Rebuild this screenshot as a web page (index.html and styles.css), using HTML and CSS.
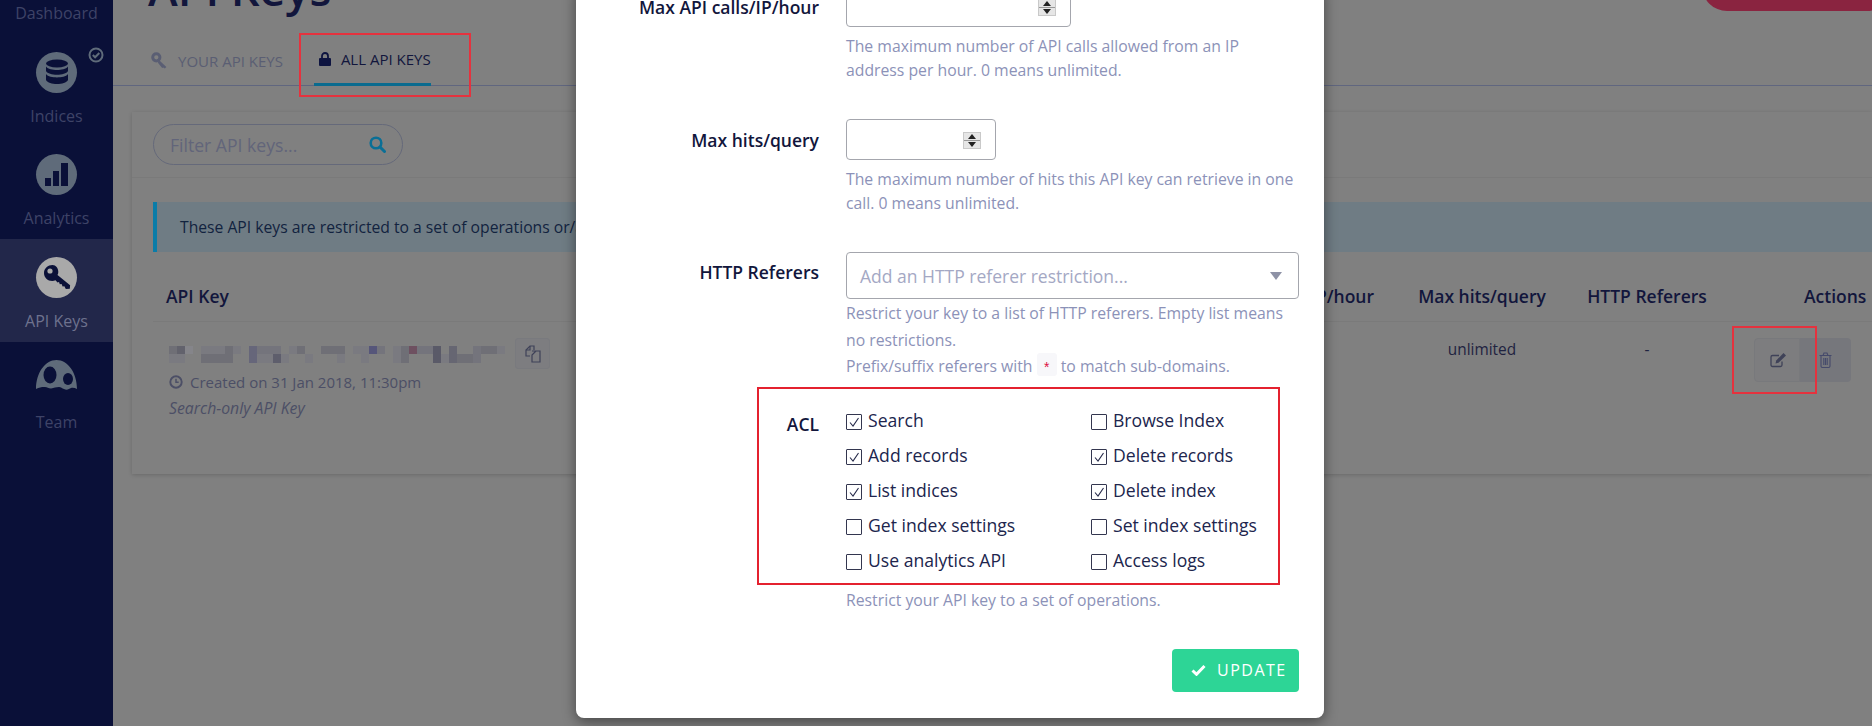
FILE: index.html
```html
<!DOCTYPE html>
<html lang="en">
<head>
<meta charset="utf-8">
<title>API Keys</title>
<link rel="stylesheet" href="styles.css">
</head>
<body>
<div class="app">
  <nav class="sidebar">
    <a class="nav-item"><span class="nav-circle"></span><span class="nav-label">Dashboard</span></a>
    <a class="nav-item">
      <span class="nav-circle">
        <svg width="24" height="26" viewBox="0 0 24 26"><g fill="#0a1038"><ellipse cx="12" cy="4.500" rx="11" ry="4"/><path d="M1 7.500c2 2.600 6.500 3.500 11 3.500s9-.9 11-3.500V12c-1.500 2.600-6 3.800-11 3.800S2.500 14.600 1 12z"/><path d="M1 15c2 2.600 6.500 3.400 11 3.400S21 17.600 23 15v6c-1.500 2.600-6 4-11 4S2.500 23.600 1 21z"/></g></svg>
      </span>
      <svg class="nav-badge" width="16" height="16" viewBox="0 0 16 16"><circle cx="8" cy="8" r="6.500" fill="none" stroke="#5f6b7a" stroke-width="2"/><path d="M4.800 8l2.300 2.300 4.200-4.300" fill="none" stroke="#5f6b7a" stroke-width="2"/></svg>
      <span class="nav-label">Indices</span>
    </a>
    <a class="nav-item">
      <span class="nav-circle">
        <svg width="24" height="26" viewBox="0 0 24 26"><g fill="#0a1038"><rect x="0" y="16" width="6" height="8"/><rect x="8" y="9" width="6" height="15"/><rect x="16" y="1" width="7" height="23"/></g></svg>
      </span>
      <span class="nav-label">Analytics</span>
    </a>
    <a class="nav-item is-active">
      <span class="nav-circle">
        <svg width="30" height="30" viewBox="0 0 30 30"><path fill="#0a1038" d="M10.500 2C6 2 2 5.500 2 10c0 4.500 3.700 8 8.200 8 1.200 0 2.300-.2 3.300-.7l2 2.200 1.500-.4.800 2.100 1.800-.1 1 2.400 1.800-.2 1.400 2.700 4-.2.300-3.600L15.500 12c.6-1 .8-1.900.8-3 0-4-2.500-7-5.800-7z"/><circle cx="8" cy="8" r="2.600" fill="#a9a9a9"/></svg>
      </span>
      <span class="nav-label">API Keys</span>
    </a>
    <a class="nav-item">
      <span class="nav-team">
        <svg width="41" height="31" viewBox="0 0 41 31"><path fill="#5f6b7a" d="M0 29C0 13 9 0 20.500 0S41 13 41 29c-2-1-4-1.500-6-1-2 1-4 2.500-7 1-2-.5-3-2-5-2-3 0-5 1-8 1.500-3 0-4-2-7-1.500-2.500 0-5 .5-8 2z"/><ellipse cx="14" cy="15" rx="6.500" ry="8.500" fill="#0a1038"/><ellipse cx="32" cy="19" rx="5" ry="6" fill="#0a1038"/></svg>
      </span>
      <span class="nav-label">Team</span>
    </a>
  </nav>

  <main class="main">
    <header class="head-row">
      <h1 class="title">API Keys</h1>
      <span class="add-btn"></span>
    </header>
    <div class="tabs">
      <a class="tab">
        <svg class="tab-icon" width="17" height="17" viewBox="0 0 16 16"><circle cx="5" cy="5" r="3.400" fill="none" stroke="#5a5e73" stroke-width="2.800"/><path d="M7.500 7.500l7 6.500-1.500 1.500-1.500-1-1 .5-4-5z" fill="#5a5e73"/></svg>
        YOUR API KEYS
      </a>
      <a class="tab is-current">
        <svg class="tab-icon" width="12" height="14" viewBox="0 0 12 14"><path d="M3 6.500V4a3 3 0 0 1 6 0v2.500" fill="none" stroke="#0e1440" stroke-width="1.800"/><rect y="6" width="12" height="8" rx="1" fill="#0e1440"/></svg>
        ALL API KEYS
      </a>
    </div>

    <section class="card">
      <div class="filter-bar">
        <div class="search">
          <input class="search-input" type="text" placeholder="Filter API keys...">
          <svg width="17" height="17" viewBox="0 0 17 17"><circle cx="7" cy="7" r="5.300" fill="none" stroke="#0a6f96" stroke-width="2.600"/><path d="M11 11l4.500 4.500" stroke="#0a6f96" stroke-width="3" stroke-linecap="round"/></svg>
        </div>
      </div>
      <div class="alert">These API keys are restricted to a set of operations or/and limits.</div>
      <div class="table-row table-head">
        <div class="cell-key">API Key</div>
        <div class="cell-calls">Max API calls/IP/hour</div>
        <div class="cell-mid">Max hits/query</div>
        <div class="cell-ref">HTTP Referers</div>
        <div class="cell-actions">Actions</div>
      </div>
      <div class="table-row table-body">
        <div class="cell-key">
          <div class="key-line">
            <svg class="key-blur" width="339" height="17" viewBox="0 0 339 17">
              <g fill="#6f6f76"><rect width="8" height="8"/><rect x="8" width="8" height="8" fill="#62626c"/><rect y="8" width="16" height="9" fill="#7a7a80"/><rect x="16" width="8" height="8" fill="#85858a"/><rect x="32" y="8" width="32" height="9"/><rect x="32" width="24" height="8" fill="#7a7a80"/><rect x="56" width="8" height="8"/><rect x="64" width="8" height="8" fill="#7a7a80"/><rect x="80" width="8" height="17" fill="#66667a"/><rect x="88" width="24" height="8" fill="#74747c"/><rect x="88" y="8" width="16" height="9" fill="#7a7a80"/><rect x="104" y="8" width="8" height="9" fill="#5e5e6c"/><rect x="112" y="8" width="8" height="9" fill="#7a7a80"/><rect x="120" width="8" height="8" fill="#7a7a80"/><rect x="128" width="8" height="8"/><rect x="136" y="8" width="8" height="9" fill="#7a7a80"/><rect x="152" width="24" height="8"/><rect x="168" y="8" width="8" height="9" fill="#7a7a80"/><rect x="184" width="16" height="8" fill="#7a7a80"/><rect x="192" y="8" width="8" height="9" fill="#7a7a80"/><rect x="200" width="8" height="8" fill="#56567a"/><rect x="208" width="8" height="8" fill="#74747c"/><rect x="224" width="8" height="17" fill="#7a7a80"/><rect x="232" y="0" width="8" height="17"/><rect x="240" width="8" height="8" fill="#6e5060"/><rect x="248" width="16" height="8" fill="#74747c"/><rect x="264" width="8" height="17" fill="#5a5a68"/><rect x="272" y="8" width="8" height="9" fill="#7a7a80"/><rect x="280" width="8" height="17" fill="#666672"/><rect x="288" y="8" width="16" height="9"/><rect x="304" width="8" height="17" fill="#74747c"/><rect x="312" width="16" height="8" fill="#6f6f76"/><rect x="328" width="8" height="8" fill="#7a7a80"/></g>
            </svg>
            <span class="copy-btn">
              <svg width="18" height="18" viewBox="0 0 18 18"><g fill="none" stroke="#3f4258" stroke-width="1.200"><path d="M6 11H2V5l4-4h4v4"/><path d="M2 5h4V1"/><path d="M8 6h8v11H8V10l4-4"/></g></svg>
            </span>
          </div>
          <div class="meta">
            <svg width="14" height="14" viewBox="0 0 13 13"><circle cx="6.500" cy="6.500" r="5.300" fill="none" stroke="#4c4f66" stroke-width="1.800"/><path d="M6.500 3.500v3.200h2.500" fill="none" stroke="#4c4f66" stroke-width="1.400"/></svg>
            Created on 31 Jan 2018, 11:30pm
          </div>
          <div class="key-type">Search-only API Key</div>
        </div>
        <div class="cell-calls"></div>
        <div class="cell-mid">unlimited</div>
        <div class="cell-ref">-</div>
        <div class="cell-actions">
          <div class="btn-group">
            <span class="action-btn is-edit">
              <svg width="17" height="16" viewBox="0 0 17 16"><path d="M12 9.500V13a1.500 1.500 0 0 1-1.500 1.500h-8A1.500 1.500 0 0 1 1 13V5a1.500 1.500 0 0 1 1.500-1.500H9" fill="none" stroke="#3f4258" stroke-width="1.300"/><path d="M5.500 11.500l.7-3L13.500 1l2.500 2.500-7.500 7.300z" fill="#3f4258"/></svg>
            </span>
            <span class="action-btn is-delete">
              <svg width="13" height="16" viewBox="0 0 13 16"><g fill="none" stroke="#454a6b" stroke-width="1.100"><path d="M.5 3.500h12M2 3.500V14a1.500 1.500 0 0 0 1.500 1.500h6A1.500 1.500 0 0 0 11 14V3.500M4 3.500L5 1h3l1 2.500M4.800 6v7M6.500 6v7M8.200 6v7"/></g></svg>
            </span>
          </div>
        </div>
      </div>
    </section>
  </main>

  <div class="modal">
    <div class="form-row">
      <label class="form-label label-input">Max API calls/IP/hour</label>
      <div class="form-field">
        <div class="number-input is-wide"><span class="spin"><i class="up"></i><i class="down"></i></span></div>
        <p class="help">The maximum number of API calls allowed from an IP address per hour. 0 means unlimited.</p>
      </div>
    </div>
    <div class="form-row">
      <label class="form-label label-input">Max hits/query</label>
      <div class="form-field">
        <div class="number-input"><span class="spin"><i class="up"></i><i class="down"></i></span></div>
        <p class="help">The maximum number of hits this API key can retrieve in one call. 0 means unlimited.</p>
      </div>
    </div>
    <div class="form-row">
      <label class="form-label label-select">HTTP Referers</label>
      <div class="form-field">
        <div class="select">Add an HTTP referer restriction...<i class="caret"></i></div>
        <p class="help help-tall">Restrict your key to a list of HTTP referers. Empty list means no restrictions.<br>Prefix/suffix referers with <code class="code">*</code> to match sub-domains.</p>
      </div>
    </div>
    <div class="form-row acl-row">
      <label class="form-label label-acl">ACL</label>
      <div class="form-field">
        <div class="acl-grid">
          <div class="check"><span class="box is-on"><svg width="12" height="12" viewBox="0 0 12 12"><path d="M2 6.500l3 3.500 5.500-8" fill="none" stroke="#262a4a" stroke-width="1.100"/></svg></span>Search</div>
          <div class="check"><span class="box"></span>Browse Index</div>
          <div class="check"><span class="box is-on"><svg width="12" height="12" viewBox="0 0 12 12"><path d="M2 6.500l3 3.500 5.500-8" fill="none" stroke="#262a4a" stroke-width="1.100"/></svg></span>Add records</div>
          <div class="check"><span class="box is-on"><svg width="12" height="12" viewBox="0 0 12 12"><path d="M2 6.500l3 3.500 5.500-8" fill="none" stroke="#262a4a" stroke-width="1.100"/></svg></span>Delete records</div>
          <div class="check"><span class="box is-on"><svg width="12" height="12" viewBox="0 0 12 12"><path d="M2 6.500l3 3.500 5.500-8" fill="none" stroke="#262a4a" stroke-width="1.100"/></svg></span>List indices</div>
          <div class="check"><span class="box is-on"><svg width="12" height="12" viewBox="0 0 12 12"><path d="M2 6.500l3 3.500 5.500-8" fill="none" stroke="#262a4a" stroke-width="1.100"/></svg></span>Delete index</div>
          <div class="check"><span class="box"></span>Get index settings</div>
          <div class="check"><span class="box"></span>Set index settings</div>
          <div class="check"><span class="box"></span>Use analytics API</div>
          <div class="check"><span class="box"></span>Access logs</div>
        </div>
        <p class="help help-acl">Restrict your API key to a set of operations.</p>
      </div>
    </div>
    <div class="modal-foot">
      <button class="update-btn" type="button">
        <svg width="15" height="12" viewBox="0 0 15 12"><path d="M1.500 6.500L5.500 10.300 13.500 2" fill="none" stroke="#fff" stroke-width="3"/></svg>
        UPDATE
      </button>
    </div>
  </div>

  <span class="mark mark-tab"></span>
  <span class="mark mark-edit"></span>
  <span class="mark mark-acl"></span>
</div>
</body>
</html>
```
FILE: styles.css
```css
* { box-sizing: border-box; }
html, body { margin: 0; padding: 0; height: 726px; overflow: hidden; }
body { font-family: "Open Sans", "Noto Sans", sans-serif; font-size: 16px; color: #12163c; background: #808080; }
p, h1 { margin: 0; }

.app { position: relative; display: flex; width: 1872px; height: 726px; overflow: hidden; background: #808080; }

/* Sidebar */
.sidebar { flex: none; width: 113px; height: 795px; margin-top: -69px; background: #0a1038; }
.nav-item { position: relative; display: flex; flex-direction: column; align-items: center; height: 102.700px; padding-top: 18px; color: #3e4367; }
.nav-item.is-active { background: #22274a; color: #6e728e; }
.nav-circle { display: flex; align-items: center; justify-content: center; width: 41px; height: 41px; border-radius: 50%; background: #5f6b7a; }
.nav-item:first-child .nav-circle { visibility: hidden; }
.is-active .nav-circle { background: #a9a9a9; }
.nav-team { display: block; width: 41px; height: 41px; }
.nav-label { margin-top: 12px; font-size: 16px; line-height: 22px; }
.nav-team + .nav-label { margin-top: 10px; }
.nav-badge { position: absolute; top: 13px; left: 88px; }

/* Main */
.main { flex: 1; min-width: 0; display: flex; flex-direction: column; }
.head-row { display: flex; justify-content: space-between; height: 30px; padding-left: 35px; }
.title { margin-top: -44px; font-size: 45px; line-height: 66px; font-weight: 600; color: #12163c; }
.add-btn { width: 190px; height: 50px; margin-top: -39px; margin-right: -20px; border-radius: 25px; background: #8a2440; }

.tabs { display: flex; gap: 30px; height: 56px; padding-left: 38px; border-bottom: 1px solid #60667f; }
.tab { display: flex; align-items: center; gap: 10px; height: 56px; padding-top: 5px; font-size: 15px; color: #5a5e73; }
.tab-icon { flex: none; }
.tab.is-current { margin-left: 1px; padding-left: 5px; gap: 10px; color: #12163c; border-bottom: 3px solid #0a6b8f; }

.card { flex: none; margin: 26px 0 0 19px; height: 362px; background: #808080; box-shadow: 0 1px 4px rgba(0,0,0,.18); }
.filter-bar { height: 66px; padding: 12px 0 0 21px; border-bottom: 1px solid #7a7a7a; }
.search { display: flex; align-items: center; width: 250px; height: 41px; padding: 0 16px; border: 1px solid #65697a; border-radius: 21px; }
.search-input { flex: 1; min-width: 0; padding: 0; border: 0; outline: 0; background: transparent; font: 17.600px "Open Sans", sans-serif; color: #5e6276; }
.search-input::placeholder { color: #62657a; opacity: 1; }

.alert { display: flex; align-items: center; height: 50px; margin: 24px 0 0 21px; padding-left: 23px; border-left: 4px solid #0a7ca8; background: #6f7c84; font-size: 15.700px; color: #12233f; white-space: nowrap; }

.table-row { display: grid; grid-template-columns: 1037px 200px 184px 146px 1fr; margin-left: 21px; }
.table-head { height: 70px; padding-top: 33px; border-bottom: 1px solid #7a7a7a; font-size: 17.500px; font-weight: 600; line-height: 22px; color: #12163c; }
.table-head .cell-key { padding-left: 13px; }
.cell-calls { padding-right: 16px; text-align: right; white-space: nowrap; }
.cell-mid, .cell-ref { text-align: center; white-space: nowrap; }
.cell-actions { padding-left: 84px; white-space: nowrap; }
.table-body { font-size: 15.400px; line-height: 22px; color: #1f2340; }
.table-body .cell-key { padding: 16px 0 0 16px; color: #4c4f66; }
.table-body .cell-mid, .table-body .cell-ref { padding-top: 17px; }
.table-body .cell-actions { padding-left: 34px; padding-top: 16px; }
.key-line { display: flex; align-items: center; gap: 7px; height: 31px; }
.key-blur { flex: none; margin-top: 1px; }
.copy-btn { display: flex; align-items: center; justify-content: center; width: 35px; height: 31px; border: 1px solid #797a7e; border-radius: 3px; background: #7d7d80; }
.meta { display: flex; align-items: center; gap: 7px; height: 25px; font-size: 15px; }
.key-type { height: 25px; margin-top: 2px; line-height: 25px; font-size: 15.800px; font-style: italic; }
.btn-group { display: flex; }
.action-btn { display: flex; align-items: center; justify-content: center; height: 44px; }
.is-edit { width: 46px; padding-left: 3px; border: 1px solid #78797c; border-radius: 4px 0 0 4px; background: #7d7d7f; }
.is-delete { width: 51px; border-radius: 0 4px 4px 0; background: #76777c; }

/* Modal */
.modal { position: absolute; top: -14px; left: 576px; width: 748px; height: 732px; padding: 0 25px 0 23px; background: #fff; border-radius: 0 0 8px 8px; box-shadow: 0 4px 14px rgba(0,0,0,.45); }
.form-row { display: grid; grid-template-columns: 220px 453px; gap: 27px; margin-bottom: 37px; }
.form-label { font-size: 17.500px; font-weight: 600; text-align: right; line-height: 24px; color: #12163c; white-space: nowrap; }
.label-input { padding-top: 9px; }
.label-select { padding-top: 8px; }
.label-acl { padding-top: 10px; }
.number-input { position: relative; width: 150px; height: 41px; border: 1px solid #a4a6ad; border-radius: 4px; }
.number-input.is-wide { width: 225px; }
.spin { position: absolute; top: 12px; right: 14px; width: 18px; height: 17px; border: 1px solid #c9c9c9; background: linear-gradient(#e6e6e6 0 47%, #999 47% 53%, #e6e6e6 53%); }
.spin i { position: absolute; left: 4px; width: 0; height: 0; border-left: 4px solid transparent; border-right: 4px solid transparent; }
.spin .up { top: 1px; border-bottom: 5px solid #222; }
.spin .down { bottom: 1px; border-top: 5px solid #222; }
.form-field { min-width: 0; }
.help { width: 452px; margin-top: 7px; font-size: 15.770px; line-height: 24px; color: #8c92b8; }
.help-tall { margin-top: 1px; line-height: 26.500px; }
.help-acl { margin-top: 10px; line-height: 24px; }
.select { position: relative; display: flex; align-items: center; height: 47px; padding-left: 13px; border: 1px solid #a4a6ad; border-radius: 4px; font-size: 17.500px; color: #a4a8c4; }
.caret { position: absolute; top: 19px; right: 16px; width: 0; height: 0; border-left: 6px solid transparent; border-right: 6px solid transparent; border-top: 8px solid #8e92a6; }
.code { display: inline-block; width: 20px; height: 23px; overflow: hidden; background: #f7f7fa; border-radius: 3px; font: 14px/32px "Liberation Mono", monospace; color: #d14; text-align: center; vertical-align: top; }
.acl-row { margin-top: -15px; margin-bottom: 0; }
.acl-grid { display: grid; grid-template-columns: 245px 1fr; grid-auto-rows: 35px; margin-top: 1px; }
.check { display: flex; align-items: center; gap: 6px; font-size: 17.600px; line-height: 35px; color: #20254d; white-space: nowrap; }
.box { flex: none; display: flex; align-items: center; justify-content: center; width: 16px; height: 16px; margin-top: 3px; border: 1px solid #33364f; border-radius: 1px; background: #fff; }
.modal-foot { display: flex; justify-content: flex-end; margin-top: 37px; }
.update-btn { display: flex; align-items: center; gap: 11px; width: 127px; height: 43px; padding: 0 0 0 19px; border: 0; border-radius: 4px; background: #2dd596; color: #fff; font: 16px "Open Sans", sans-serif; letter-spacing: 1.500px; }

/* Red annotation boxes drawn over the screenshot */
.mark { position: absolute; border: 2px solid #e4212f; pointer-events: none; }
.mark-tab { left: 299px; top: 33px; width: 172px; height: 64px; border-color: #e5323e; }
.mark-edit { left: 1732px; top: 326px; width: 85px; height: 68px; border-color: #e5323e; }
.mark-acl { left: 757px; top: 387px; width: 523px; height: 198px; }
```
